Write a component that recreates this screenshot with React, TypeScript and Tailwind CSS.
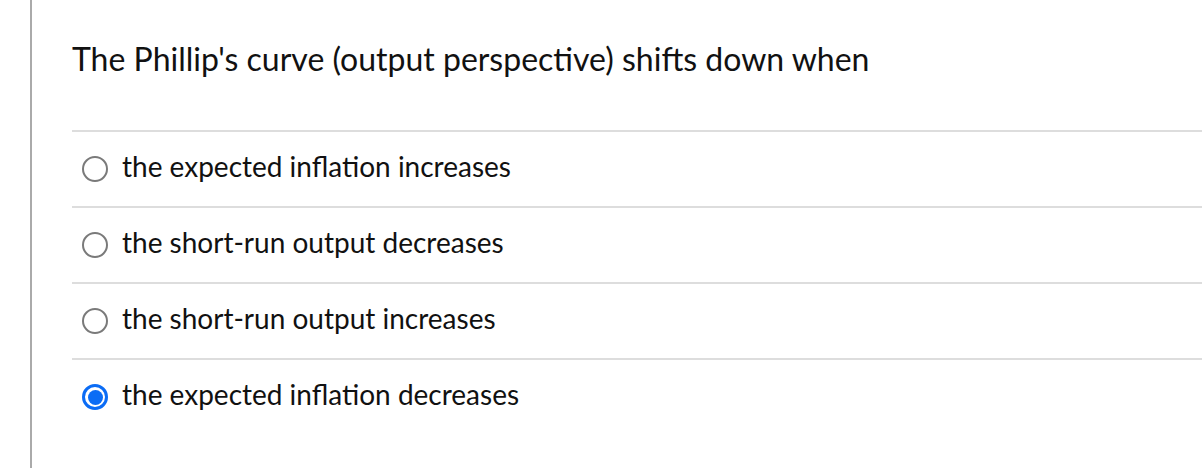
import React from "react";

const options = [
  "the expected inflation increases",
  "the short-run output decreases",
  "the short-run output increases",
  "the expected inflation decreases",
];

function Radio({ checked }: { checked: boolean }) {
  if (checked) {
    return (
      <span className="w-[26px] h-[26px] rounded-full border-[3px] border-[#0b6cf5] flex items-center justify-center shrink-0">
        <span className="w-[15px] h-[15px] rounded-full bg-[#0b6cf5]" />
      </span>
    );
  }
  return <span className="w-[26px] h-[26px] rounded-full border-2 border-[#7a7a7a] bg-white shrink-0" />;
}

export default function App() {
  return (
    <div className="w-[1202px] h-[468px] bg-white flex overflow-hidden" style={{ fontFamily: "Lato, 'Noto Sans', sans-serif" }}>
      <div className="ml-[30px] w-[2px] h-full bg-[#aaaaaa]" />
      <div className="flex-1 pl-[40px] text-[#111111]">
        <div className="pt-[39px] h-[130px] text-[32px] leading-[40px]">
          The Phillip's curve (output perspective) shifts down when
        </div>
        {options.map((o, i) => (
          <div key={i} className="h-[76px] border-t-2 border-[#dddddd] flex items-center pl-[10px] gap-[14px]">
            <Radio checked={i === 3} />
            <span className="text-[28px] leading-[30px] -mt-[6px]">{o}</span>
          </div>
        ))}
      </div>
    </div>
  );
}
